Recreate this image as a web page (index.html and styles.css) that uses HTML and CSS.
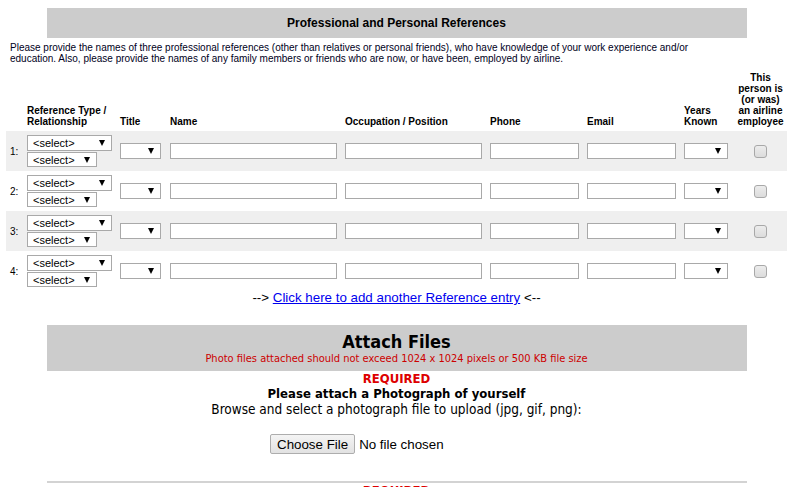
FILE: index.html
```html
<!DOCTYPE html>
<html lang="en">
<head>
<meta charset="utf-8">
<title>References and Attachments</title>
<link rel="stylesheet" href="styles.css">
</head>
<body>
<div class="page">
  <div class="section-bar"><h2>Professional and Personal References</h2></div>
  <p class="intro">Please provide the names of three professional references (other than relatives or personal friends), who have knowledge of your work experience and/or education. Also, please provide the names of any family members or friends who are now, or have been, employed by airline.</p>

  <div class="ref-table">
    <div class="ref-grid ref-head">
      <div></div>
      <div>Reference Type /<br>Relationship</div>
      <div>Title</div>
      <div>Name</div>
      <div>Occupation / Position</div>
      <div>Phone</div>
      <div>Email</div>
      <div>Years<br>Known</div>
      <div class="center">This<br>person is<br>(or was)<br>an airline<br>employee</div>
    </div>

    <div class="ref-grid ref-row alt">
      <div class="num">1:</div>
      <div class="stack"><span class="sel w-type"><select><option>&lt;select&gt;</option></select></span><span class="sel w-type2 short"><select><option>&lt;select&gt;</option></select></span></div>
      <div><span class="sel w-title"><select><option></option></select></span></div>
      <div><input class="w-name" type="text"></div>
      <div><input class="w-occ" type="text"></div>
      <div><input class="w-phone" type="text"></div>
      <div><input class="w-email" type="text"></div>
      <div><span class="sel w-years"><select><option></option></select></span></div>
      <div class="center"><input class="chk" type="checkbox"></div>
    </div>

    <div class="ref-grid ref-row">
      <div class="num">2:</div>
      <div class="stack"><span class="sel w-type"><select><option>&lt;select&gt;</option></select></span><span class="sel w-type2 short"><select><option>&lt;select&gt;</option></select></span></div>
      <div><span class="sel w-title"><select><option></option></select></span></div>
      <div><input class="w-name" type="text"></div>
      <div><input class="w-occ" type="text"></div>
      <div><input class="w-phone" type="text"></div>
      <div><input class="w-email" type="text"></div>
      <div><span class="sel w-years"><select><option></option></select></span></div>
      <div class="center"><input class="chk" type="checkbox"></div>
    </div>

    <div class="ref-grid ref-row alt">
      <div class="num">3:</div>
      <div class="stack"><span class="sel w-type"><select><option>&lt;select&gt;</option></select></span><span class="sel w-type2 short"><select><option>&lt;select&gt;</option></select></span></div>
      <div><span class="sel w-title"><select><option></option></select></span></div>
      <div><input class="w-name" type="text"></div>
      <div><input class="w-occ" type="text"></div>
      <div><input class="w-phone" type="text"></div>
      <div><input class="w-email" type="text"></div>
      <div><span class="sel w-years"><select><option></option></select></span></div>
      <div class="center"><input class="chk" type="checkbox"></div>
    </div>

    <div class="ref-grid ref-row">
      <div class="num">4:</div>
      <div class="stack"><span class="sel w-type"><select><option>&lt;select&gt;</option></select></span><span class="sel w-type2 short"><select><option>&lt;select&gt;</option></select></span></div>
      <div><span class="sel w-title"><select><option></option></select></span></div>
      <div><input class="w-name" type="text"></div>
      <div><input class="w-occ" type="text"></div>
      <div><input class="w-phone" type="text"></div>
      <div><input class="w-email" type="text"></div>
      <div><span class="sel w-years"><select><option></option></select></span></div>
      <div class="center"><input class="chk" type="checkbox"></div>
    </div>
  </div>

  <div class="add-line">--&gt; <a href="#">Click here to add another Reference entry</a> &lt;--</div>

  <div class="attach-bar">
    <h2>Attach Files</h2>
    <p class="note">Photo files attached should not exceed 1024 x 1024 pixels or 500 KB file size</p>
  </div>

  <div class="upload">
    <div class="req">REQUIRED</div>
    <div class="upload-title">Please attach a Photograph of yourself</div>
    <div class="upload-hint">Browse and select a photograph file to upload (jpg, gif, png):</div>
    <div class="file-row"><input class="file" type="file"></div>
  </div>

  <div class="divider"></div>

  <div class="upload">
    <div class="req">REQUIRED</div>
    <div class="upload-title">Please attach a copy of your Resume</div>
  </div>
</div>
</body>
</html>
```

FILE: styles.css
```css
html {
  overflow: hidden;
}

body {
  margin: 0;
  background: #fff;
  color: #000;
  font-family: "Liberation Sans", Arial, sans-serif;
}

.page {
  width: 781px;
  padding: 8px 0 0 6px;
}

.section-bar {
  width: 700px;
  height: 30px;
  margin: 0 auto;
  background: #ccc;
  display: flex;
  align-items: center;
  justify-content: center;
}

.section-bar h2 {
  margin: 0;
  font-size: 12px;
  line-height: 14px;
  font-weight: bold;
}

.intro {
  margin: 4px 0 0;
  padding: 0 77px 0 4px;
  font-size: 10px;
  line-height: 11px;
  color: #000022;
}

.ref-table {
  margin-top: 8px;
}

.ref-grid {
  display: grid;
  grid-template-columns: 21px 93px 50px 175px 145px 97px 97px 50px 53px;
}

.ref-head {
  align-items: end;
  padding-bottom: 4px;
  font-size: 10px;
  line-height: 11px;
  font-weight: bold;
}

.center {
  text-align: center;
}

.ref-row {
  height: 40px;
  align-items: center;
}

.ref-row.alt {
  background: #efefef;
}

.num {
  padding-left: 4px;
  font-size: 10px;
}

.stack {
  display: flex;
  flex-direction: column;
  gap: 1px;
}

.sel {
  position: relative;
  display: block;
  height: 16px;
}

.sel.short {
  height: 15px;
}

.sel::after {
  content: "";
  position: absolute;
  right: 7px;
  top: 50%;
  margin-top: -3px;
  border-left: 3px solid transparent;
  border-right: 3px solid transparent;
  border-top: 6px solid #000;
  pointer-events: none;
}

.sel select {
  -webkit-appearance: none;
  appearance: none;
  display: block;
  width: 100%;
  height: 100%;
  box-sizing: border-box;
  margin: 0;
  padding: 0 0 0 5px;
  border: 1px solid #a9a9a9;
  border-radius: 0;
  background: #fff;
  color: #000;
  font-family: "Liberation Sans", Arial, sans-serif;
  font-size: 11px;
  line-height: 14px;
}

.w-type { width: 85px; }
.w-type2 { width: 70px; }
.w-title { width: 41px; }
.w-years { width: 44px; }

input[type="text"] {
  display: block;
  height: 16px;
  box-sizing: border-box;
  margin: 0;
  padding: 0 2px;
  border: 1px solid #a9a9a9;
  background: #fff;
  font-size: 11px;
}

.w-name { width: 167px; }
.w-occ { width: 137px; }
.w-phone { width: 89px; }
.w-email { width: 89px; }

.chk {
  -webkit-appearance: none;
  appearance: none;
  display: block;
  width: 13px;
  height: 13px;
  margin: 0 auto;
  box-sizing: border-box;
  border: 1px solid #a8a8a8;
  border-radius: 3px;
  background: linear-gradient(#ececec, #dcdcdc);
}

.add-line {
  text-align: center;
  font-size: 13.33px;
  line-height: 14px;
}

.add-line a {
  color: #00e;
  text-decoration: underline;
}

.attach-bar {
  width: 700px;
  margin: 20px auto 0;
  padding: 7px 0 6px;
  background: #ccc;
  text-align: center;
  font-family: "DejaVu Sans Condensed", "DejaVu Sans", sans-serif;
  font-stretch: condensed;
}

.attach-bar h2 {
  margin: 0;
  font-size: 18px;
  line-height: 20px;
  font-weight: bold;
}

.note {
  margin: 0;
  font-size: 11px;
  line-height: 13px;
  color: #c00;
}

.upload {
  text-align: center;
  font-family: "DejaVu Sans Condensed", "DejaVu Sans", sans-serif;
  font-stretch: condensed;
  font-size: 13px;
}

.req {
  color: #d00;
  font-weight: bold;
  line-height: 15px;
}

.upload-title {
  font-weight: bold;
  line-height: 15px;
}

.upload-hint {
  font-size: 13.5px;
  line-height: 16px;
}

.file-row {
  margin-top: 17px;
  display: flex;
  justify-content: center;
}

.file {
  width: 253px;
  height: 20px;
  margin: 0;
  font-family: "Liberation Sans", Arial, sans-serif;
  font-size: 13.33px;
  font-stretch: normal;
  color: #000;
}

.file::file-selector-button {
  height: 20px;
  margin: 0 4px 0 0;
  padding: 0 6px;
  border: 1px solid #adadad;
  border-radius: 2px;
  background: linear-gradient(#f4f4f4, #e2e2e2);
  color: #000;
  font: inherit;
}

.divider {
  width: 700px;
  margin: 27px auto 0;
  border-top: 2px solid #d3d3d3;
}
```
